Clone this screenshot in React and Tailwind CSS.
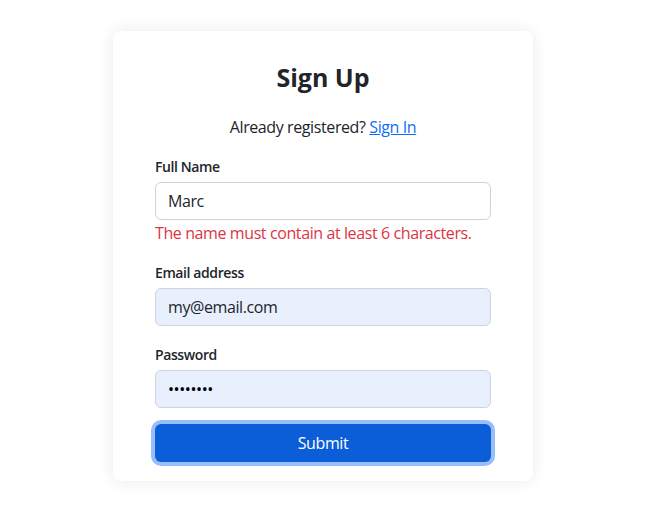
import { useState } from "react";

const SignUp = () => {
  const [name, setName] = useState("Marc");
  const [email, setEmail] = useState("my@email.com");
  const [password, setPassword] = useState("password");

  return (
    <div className="min-h-screen bg-white pt-[31px] font-['Open_Sans',sans-serif] text-[#212529]">
      {/* Card */}
      <div className="ml-[113px] w-[420px] rounded-lg bg-white px-[42px] pt-[30px] pb-[19px] tracking-[-0.025em] shadow-[0_0_16px_rgba(0,0,0,0.09)]">
        <h3 className="text-center text-[25px] font-bold leading-[32px] tracking-normal">Sign Up</h3>
        <p className="mt-[22px] text-center text-base leading-6">
          Already registered?{" "}
          <a href="#" className="text-[#0d6efd] underline">
            Sign In
          </a>
        </p>

        <form onSubmit={(e) => e.preventDefault()}>
          <label className="mt-[18px] block text-[14px] font-semibold leading-5">Full Name</label>
          <input
            type="text"
            value={name}
            onChange={(e) => setName(e.target.value)}
            className="mt-[5px] block h-[38px] w-full rounded-md border border-[#ced4da] bg-white px-3 text-base tracking-[-0.025em] outline-none"
          />
          <div className="mt-px text-base leading-6 text-[#dc3545]">
            The name must contain at least 6 characters.
          </div>

          <label className="mt-[18px] block text-[14px] font-semibold leading-5">Email address</label>
          <input
            type="email"
            value={email}
            onChange={(e) => setEmail(e.target.value)}
            className="mt-[5px] block h-[38px] w-full rounded-md border border-[#ced4da] bg-[#e8f0fe] px-3 text-base tracking-[-0.025em] outline-none"
          />

          <label className="mt-[19px] block text-[14px] font-semibold leading-5">Password</label>
          <input
            type="password"
            value={password}
            onChange={(e) => setPassword(e.target.value)}
            className="mt-[5px] block h-[38px] w-full rounded-md border border-[#ced4da] bg-[#e8f0fe] px-3 text-base text-black outline-none"
          />

          <button
            type="submit"
            className="mt-[16px] block h-[38px] w-full rounded-md bg-[#0b5ed7] text-base text-white ring-4 ring-[#98bef9]"
          >
            Submit
          </button>
        </form>
      </div>
    </div>
  );
};

export default SignUp;
